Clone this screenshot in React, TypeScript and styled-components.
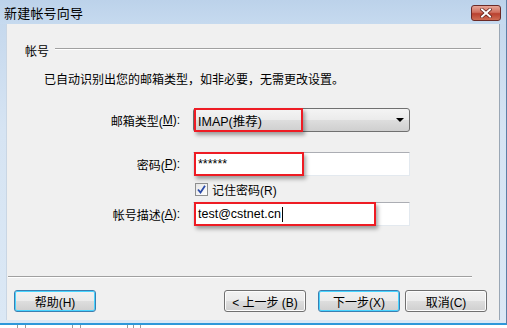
import styled, { createGlobalStyle } from 'styled-components'

const GlobalStyle = createGlobalStyle`
  html, body {
    margin: 0;
    padding: 0;
    background: #ffffff;
  }
  body {
    font-family: "Liberation Sans", "Noto Sans CJK SC", sans-serif;
    font-size: 12px;
    color: #000;
  }
`

const Screen = styled.div`
  width: 507px;
  height: 328px;
  overflow: hidden;
  background: #fff;
`

const Window = styled.div`
  width: 507px;
  height: 325px;
  box-sizing: border-box;
  display: flex;
  flex-direction: column;
  background: linear-gradient(180deg, #c2d6ec 0%, #d6e4f3 40%, #dbe8f5 100%);
  border-bottom: 2px solid #2e98da;
  border-right: 1px solid #5d7fa6;
`

const TitleBar = styled.div`
  height: 24px;
  flex-shrink: 0;
  display: flex;
  align-items: center;
  justify-content: space-between;
  padding: 0 5px 0 4px;
  background: linear-gradient(180deg, #bcd2ea 0%, #c6daef 100%);
`

const Title = styled.div`
  font-size: 13px;
  color: #000;
  letter-spacing: 0.2px;
`

const CloseButton = styled.div`
  width: 30px;
  height: 16px;
  margin-top: 1px;
  border: 1px solid #6b2a27;
  border-radius: 3px;
  box-sizing: border-box;
  background: linear-gradient(180deg, #e8a697 0%, #d0705f 45%, #b9412f 55%, #cf6d54 100%);
  display: flex;
  align-items: center;
  justify-content: center;
`

const Body = styled.div`
  flex: 1;
  margin: 0 6px 3px 6px;
  background: #f0f0f0;
  display: flex;
  flex-direction: column;
  border-left: 1px solid #c9d6e4;
  border-right: 1px solid #9aa7b5;
`

const SectionHeader = styled.div`
  display: flex;
  align-items: center;
  gap: 6px;
  margin: 18px 18px 0 18px;
  height: 16px;
`

const SectionTitle = styled.span`
  font-size: 12px;
`

const SectionLine = styled.div`
  flex: 1;
  height: 1px;
  background: #a0a0a0;
  border-bottom: 1px solid #ffffff;
  margin-top: -3px;
`

const Description = styled.div`
  margin: 14px 0 0 37px;
  line-height: 16px;
  font-size: 12px;
`

const Form = styled.div`
  display: grid;
  grid-template-columns: 173px 217px;
  column-gap: 13px;
  margin-top: 20px;
`

const Label = styled.label<{ $top: number }>`
  margin-top: ${(p) => p.$top}px;
  display: flex;
  align-items: center;
  justify-content: flex-end;
  height: 24px;
  font-size: 12px;
  u {
    text-decoration: underline;
  }
`

const FieldCell = styled.div<{ $top: number }>`
  margin-top: ${(p) => p.$top}px;
  position: relative;
`

const Select = styled.div`
  height: 24px;
  box-sizing: border-box;
  border: 1px solid #707070;
  border-radius: 3px;
  background: linear-gradient(180deg, #f4f4f4 0%, #ebebeb 48%, #dddddd 52%, #cfcfcf 100%);
  display: flex;
  align-items: center;
  justify-content: space-between;
  padding: 0 4px 0 4px;
  font-size: 12.5px;
`

const Arrow = styled.span`
  width: 0;
  height: 0;
  border-left: 4px solid transparent;
  border-right: 4px solid transparent;
  border-top: 4px solid #000;
  margin-right: 1px;
`

const TextInput = styled.div`
  height: 24px;
  box-sizing: border-box;
  background: #fff;
  border: 1px solid #e3e9ef;
  border-top-color: #abadb3;
  display: flex;
  align-items: center;
  padding: 0 4px;
  font-size: 12.5px;
`

const Caret = styled.span`
  display: inline-block;
  width: 1px;
  height: 15px;
  background: #000;
  margin-left: 1px;
`

const Highlight = styled.div<{ $width: number }>`
  position: absolute;
  left: 1px;
  top: 0;
  width: ${(p) => p.$width}px;
  height: 24px;
  box-sizing: border-box;
  border: 2px solid #ee1c24;
  box-shadow: 2px 3px 4px rgba(0, 0, 0, 0.35);
  pointer-events: none;
`

const CheckRow = styled.div`
  grid-column: 2;
  margin-top: 7px;
  height: 12px;
  display: flex;
  align-items: center;
  gap: 4px;
  padding-left: 2px;
  font-size: 12px;
`

const CheckBox = styled.span`
  width: 13px;
  height: 13px;
  box-sizing: border-box;
  border: 1px solid #8e8f8f;
  background: linear-gradient(135deg, #e6e6e6 0%, #ffffff 100%);
  display: flex;
  align-items: center;
  justify-content: center;
`

const Footer = styled.div`
  margin-top: auto;
  padding: 0 0 8px 0;
`

const Separator = styled.div`
  height: 1px;
  background: #a0a0a0;
  border-bottom: 1px solid #ffffff;
  margin: 0 27px 0 1px;
`

const ButtonRow = styled.div`
  display: flex;
  align-items: center;
  margin-top: 12px;
  padding-left: 7px;
`

const Button = styled.button<{ $focused?: boolean; $gap?: number }>`
  width: 82px;
  height: 22px;
  margin-left: ${(p) => p.$gap ?? 0}px;
  box-sizing: border-box;
  border: 1px solid ${(p) => (p.$focused ? '#3c7fb1' : '#707070')};
  border-radius: 3px;
  background: linear-gradient(180deg, #f2f2f2 0%, #ebebeb 48%, #dddddd 52%, #cfcfcf 100%);
  box-shadow: inset 0 0 0 1px ${(p) => (p.$focused ? '#48d4ff' : '#fcfcfc')};
  font-family: "Liberation Sans", "Noto Sans CJK SC", sans-serif;
  font-size: 12px;
  color: #000;
  padding: 0;
  display: flex;
  align-items: center;
  justify-content: center;
`

const BottomStrip = styled.div`
  height: 3px;
  position: relative;
  background: #fff;
`

const Tick = styled.span<{ $x: number }>`
  position: absolute;
  left: ${(p) => p.$x}px;
  top: 0;
  width: 1px;
  height: 3px;
  background: #9a9a9a;
`

export default function App() {
  return (
    <Screen>
      <GlobalStyle />
      <Window>
        <TitleBar>
          <Title>新建帐号向导</Title>
          <CloseButton>
            <svg width="12" height="10" viewBox="0 0 12 10">
              <path
                d="M2 1.5 L10 8.5 M10 1.5 L2 8.5"
                stroke="#5a1a14"
                strokeWidth="3.4"
                strokeLinecap="square"
              />
              <path
                d="M2 1.5 L10 8.5 M10 1.5 L2 8.5"
                stroke="#ffffff"
                strokeWidth="2"
                strokeLinecap="square"
              />
            </svg>
          </CloseButton>
        </TitleBar>
        <Body>
          <SectionHeader>
            <SectionTitle>帐号</SectionTitle>
            <SectionLine />
          </SectionHeader>
          <Description>已自动识别出您的邮箱类型，如非必要，无需更改设置。</Description>
          <Form>
            <Label $top={0}>
              邮箱类型(<u>M</u>):
            </Label>
            <FieldCell $top={0}>
              <Select>
                <span>IMAP(推荐)</span>
                <Arrow />
              </Select>
              <Highlight $width={109} />
            </FieldCell>

            <Label $top={20}>
              密码(<u>P</u>):
            </Label>
            <FieldCell $top={20}>
              <TextInput>******</TextInput>
              <Highlight $width={110} />
            </FieldCell>

            <CheckRow>
              <CheckBox>
                <svg width="9" height="9" viewBox="0 0 9 9">
                  <path d="M1 4.5 L3.5 7.5 L8 0.8" stroke="#2a4aa8" strokeWidth="1.8" fill="none" />
                </svg>
              </CheckBox>
              <span>记住密码(R)</span>
            </CheckRow>

            <Label $top={7}>
              帐号描述(<u>A</u>):
            </Label>
            <FieldCell $top={7}>
              <TextInput>
                test@cstnet.cn
                <Caret />
              </TextInput>
              <Highlight $width={182} />
            </FieldCell>
          </Form>
          <Footer>
            <Separator />
            <ButtonRow>
              <Button $focused>帮助(H)</Button>
              <Button $gap={128}>&lt; 上一步 (B)</Button>
              <Button $focused $gap={12}>下一步(X)</Button>
              <Button $gap={5}>取消(C)</Button>
            </ButtonRow>
          </Footer>
        </Body>
      </Window>
      <BottomStrip>
        <Tick $x={17} />
        <Tick $x={25} />
        <Tick $x={72} />
        <Tick $x={80} />
        <Tick $x={127} />
        <Tick $x={133} />
        <Tick $x={140} />
      </BottomStrip>
    </Screen>
  )
}
